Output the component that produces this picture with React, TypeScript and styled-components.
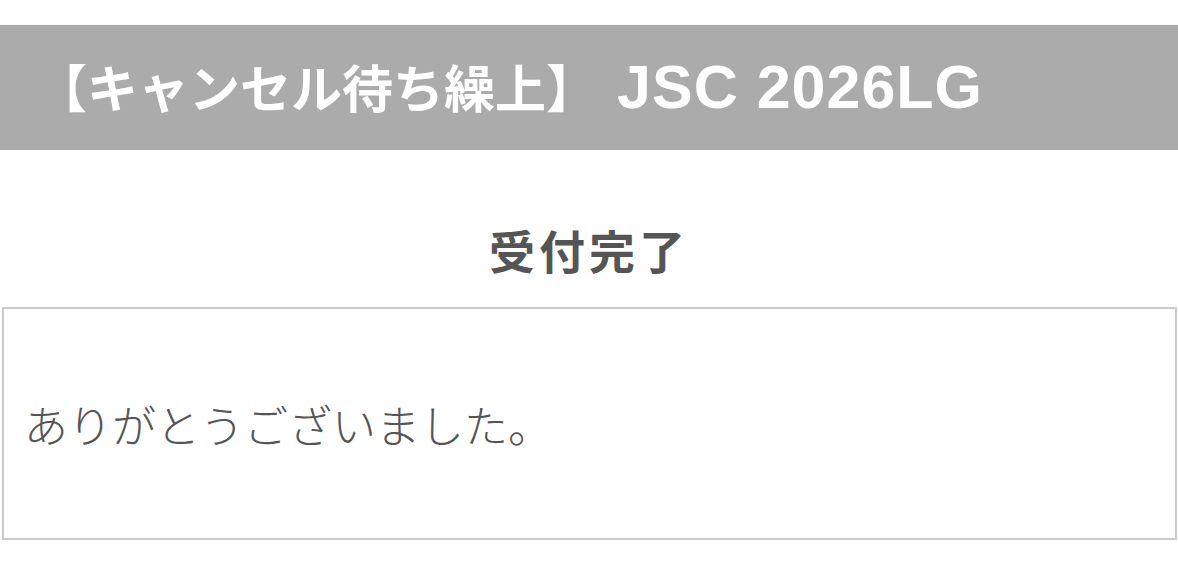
import React from 'react';
import styled, { createGlobalStyle } from 'styled-components';

const GlobalStyle = createGlobalStyle`
  html, body {
    margin: 0;
    padding: 0;
    background: #fff;
  }

  body {
    font-family: "Noto Sans CJK JP", "Liberation Sans", sans-serif;
    color: #555;
  }
`;

const Page = styled.main`
  display: flex;
  flex-direction: column;
  padding-top: 25px;
`;

const TitleBar = styled.header`
  display: flex;
  align-items: center;
  height: 125px;
  padding-left: 36px;
  background: #ababab;
  color: #fff;

  h1 {
    margin: 0;
    font-size: 51px;
    font-weight: 700;
    line-height: 1;
    white-space: nowrap;
  }
`;

const Latin = styled.span`
  margin-left: 20px;
  font-family: "Liberation Sans", sans-serif;
  font-size: 61px;
  letter-spacing: 1px;
`;

const Heading = styled.h2`
  margin: 0;
  padding: 76px 0 35px;
  text-align: center;
  font-size: 46px;
  font-weight: 700;
  letter-spacing: 4px;
  line-height: 1;
  color: #555;
`;

const MessageBox = styled.section`
  display: flex;
  align-items: center;
  height: 233px;
  box-sizing: border-box;
  margin: 0 1px 0 2px;
  padding: 0 20px;
  border: 2px solid #cbcbcb;
`;

const Message = styled.p`
  margin: 0;
  font-size: 44px;
  font-weight: 300;
  line-height: 1;
  color: #555;
`;

const App: React.FC = () => {
  return (
    <>
      <GlobalStyle />
      <Page>
        <TitleBar>
          <h1>
            【キャンセル待ち繰上】<Latin>JSC 2026LG</Latin>
          </h1>
        </TitleBar>

        <Heading>受付完了</Heading>

        <MessageBox>
          <Message>ありがとうございました。</Message>
        </MessageBox>
      </Page>
    </>
  );
};

export default App;
